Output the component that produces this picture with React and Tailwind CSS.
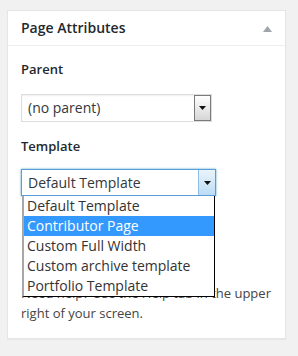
import React from "react";

function Arrow({ color = "#111" }) {
  return (
    <svg width="7" height="4" viewBox="0 0 7 4" className="block">
      <polygon points="0,0 7,0 3.5,4" fill={color} />
    </svg>
  );
}

export default function App() {
  const items = [
    "Default Template",
    "Contributor Page",
    "Custom Full Width",
    "Custom archive template",
    "Portfolio Template",
  ];
  return (
    <div
      className="w-[298px] h-[356px] bg-[#f1f1f1] pt-[10px] pl-[7px]"
      style={{ fontFamily: '"Open Sans", "Noto Sans", sans-serif' }}
    >
      <div className="w-[279px] h-[329px] bg-white border border-[#e5e5e5] shadow-[0_1px_1px_rgba(0,0,0,0.04)]">
        <div className="h-[35px] border-b border-[#eeeeee] flex items-center justify-between pl-[13px] pr-[13px]">
          <span className="text-[14px] font-semibold text-[#23282d] leading-[18px]">
            Page Attributes
          </span>
          <svg width="9" height="6" viewBox="0 0 9 6" className="block mt-[1px]">
            <polygon points="0,6 9,6 4.5,0" fill="#a0a5aa" />
          </svg>
        </div>
        <div className="pl-[13px] pt-[14px]">
          <div className="text-[13px] font-semibold text-[#23282d] leading-[18px]">Parent</div>
          <div className="mt-[16px] w-[191px] h-[28px] border border-[#dddddd] shadow-[inset_0_1px_2px_rgba(0,0,0,0.07)] flex items-center">
            <span className="flex-1 pl-[6px] text-[14px] text-[#32373c] leading-[18px]">(no parent)</span>
            <div className="w-[17px] h-[26px] border border-[#7a7a7a] bg-gradient-to-b from-[#ffffff] to-[#d6d6d6] flex items-center justify-center">
              <Arrow />
            </div>
          </div>
          <div className="mt-[15px] text-[13px] font-semibold text-[#23282d] leading-[18px]">Template</div>
          <div className="relative mt-[14px] w-[195px]">
            <div className="h-[27px] border border-[#5b9dd9] shadow-[0_0_2px_rgba(30,140,190,0.8)] flex items-center bg-white">
              <span className="flex-1 pl-[6px] text-[14px] text-[#32373c] leading-[18px]">Default Template</span>
              <div className="w-[17px] h-[25px] border-l border-[#8fbde6] bg-gradient-to-b from-[#eaf4fc] to-[#bcdcf4] flex items-center justify-center">
                <Arrow />
              </div>
            </div>
            <div className="absolute top-full left-[1px] w-[193px] bg-white border-l-2 border-l-[#a8a8a8] border-r border-b border-r-black border-b-black z-10">
              {items.map((t, i) => (
                <div
                  key={t}
                  className={
                    "h-[20px] pl-[3px] flex items-center text-[14px] leading-[18px] " +
                    (i === 1 ? "bg-[#3399ff] text-white" : "text-[#333333]")
                  }
                >
                  {t}
                </div>
              ))}
            </div>
          </div>
          <p className="mt-[87px] w-[260px] text-[13px] leading-[20px] text-[#444444]">
            Need help? Use the Help tab in the upper right of your screen.
          </p>
        </div>
      </div>
    </div>
  );
}
